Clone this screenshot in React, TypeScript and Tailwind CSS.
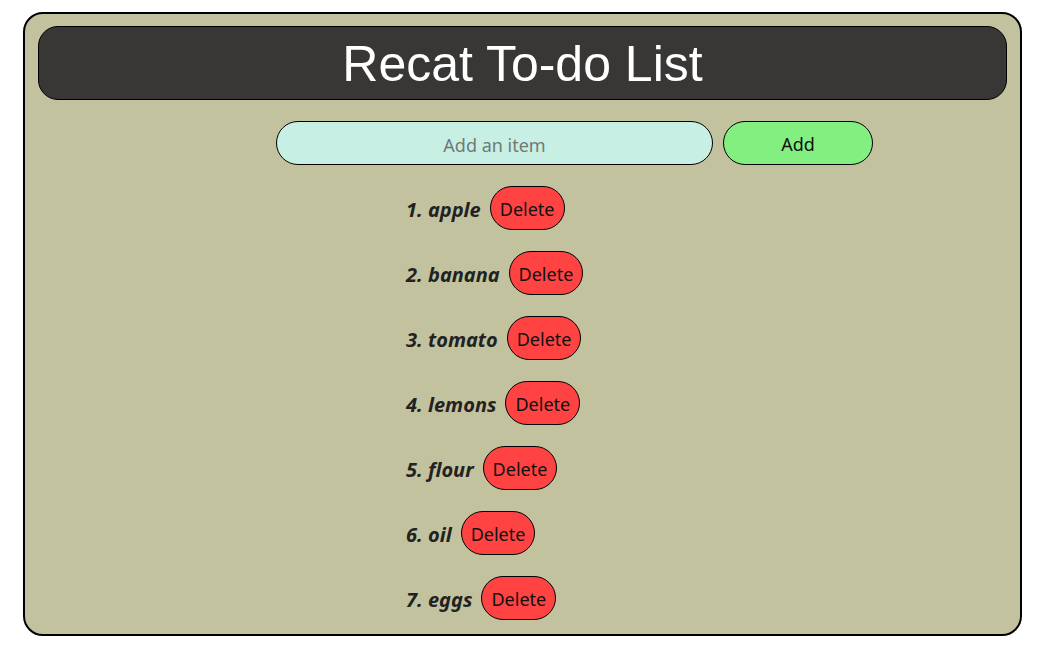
import React, { useState } from "react";

const initialItems = ["apple", "banana", "tomato", "lemons", "flour", "oil", "eggs"];

const App = () => {
  const [items, setItems] = useState<string[]>(initialItems);
  const [text, setText] = useState("");

  const addItem = () => {
    if (!text.trim()) return;
    setItems([...items, text.trim()]);
    setText("");
  };

  const deleteItem = (index: number) => {
    setItems(items.filter((_, i) => i !== index));
  };

  return (
    <div className="w-[1057px] h-[656px] bg-white pt-[12px] pl-[23px] font-['Noto_Sans',sans-serif]">
      <div className="w-[999px] h-[624px] overflow-hidden bg-[#c2c29e] border-2 border-black rounded-[20px] pt-[12px] px-[13px]">
        <div className="h-[74px] bg-[#383735] border border-black rounded-[20px] flex items-center justify-center">
          <h1 className="text-white text-[50px] leading-none font-['Liberation_Sans',Arial,sans-serif] pt-[2px]">
            Recat To-do List
          </h1>
        </div>

        <div className="flex mt-[21px] ml-[238px] gap-[10px]">
          <input
            value={text}
            onChange={(e) => setText(e.target.value)}
            placeholder="Add an item"
            className="w-[437px] h-[44px] pt-[3px] rounded-full border border-black bg-[#c8efe3] text-center text-[18px] text-[#222] placeholder:text-[#6f7a76] outline-none"
          />
          <button
            onClick={addItem}
            className="w-[150px] h-[44px] pt-[3px] rounded-full border border-black bg-[#82ef80] text-[18px] text-[#111]"
          >
            Add
          </button>
        </div>

        <ol className="ml-[368px] mt-[21px] flex flex-col gap-[21px]">
          {items.map((item, i) => (
            <li key={i} className="flex items-center gap-[9px] h-[44px]">
              <span className="text-[20px] font-bold italic text-[#222] pt-[3px]">
                {i + 1}. {item}
              </span>
              <button
                onClick={() => deleteItem(i)}
                className="h-[44px] px-[9px] pt-[3px] rounded-full border border-black bg-[#ff4343] text-[18px] text-[#111]"
              >
                Delete
              </button>
            </li>
          ))}
        </ol>
      </div>
    </div>
  );
};

export default App;
